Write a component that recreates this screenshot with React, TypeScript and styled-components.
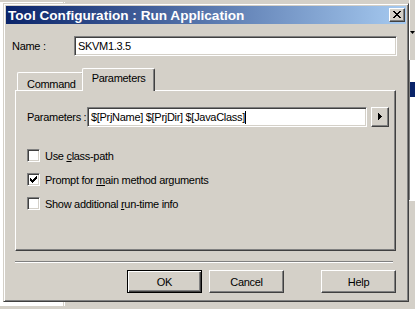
import styled, { createGlobalStyle, css } from 'styled-components'

const face = '#d4d0c8'
const shadow = '#808080'
const dark = '#404040'

const GlobalStyle = createGlobalStyle`
  html, body {
    margin: 0;
    padding: 0;
    background: ${face};
  }
  body {
    font-family: 'Liberation Sans', Arial, sans-serif;
    font-size: 11px;
    letter-spacing: -0.3px;
    color: #000;
  }
`

const Desktop = styled.div`
  position: relative;
  width: 415px;
  height: 309px;
  overflow: hidden;
  background: ${face};
`

/* windows behind the dialog */
const ProjectPane = styled.div`
  position: absolute;
  left: 0;
  top: 2px;
  width: 63px;
  height: 304px;
  background: #fff;
  border-right: 1px solid ${face};
  box-shadow: 1px 0 #fff;
`

const EditorEdge = styled.div`
  position: absolute;
  left: 409px;
  top: 0;
  width: 6px;
  height: 309px;
  display: flex;
  flex-direction: column;
  background: ${face};
`

const EdgeToolbar = styled.div`
  height: 60px;
  display: flex;
  align-items: flex-start;
  justify-content: flex-end;
  padding-top: 31px;
  box-sizing: border-box;
  border-left: 1px solid #fff;
`

const EdgeList = styled.div`
  height: 140px;
  background: #fff;
  padding-top: 22px;
  box-sizing: border-box;
  border-left: 1px solid ${shadow};
`

const EdgeSelection = styled.div`
  height: 15px;
  background: #0a246a;
`

const EdgeFooter = styled.div`
  flex: 1;
  border-top: 1px solid #fff;
`

/* dialog */
const Dialog = styled.div`
  position: absolute;
  left: 3px;
  top: 3px;
  width: 406px;
  height: 299px;
  box-sizing: border-box;
  background: ${face};
  border: 1px solid;
  border-color: ${face} ${dark} ${dark} ${face};
  box-shadow: inset 1px 1px #fff, inset -1px -1px ${shadow};
  padding: 2px;
  display: flex;
  flex-direction: column;
`

const TitleBar = styled.div`
  height: 18px;
  flex: none;
  display: flex;
  align-items: center;
  justify-content: space-between;
  padding: 0 1px 0 2px;
  background: linear-gradient(to right, #0a246a, #a6caf0);
`

const Title = styled.span`
  color: #fff;
  font-weight: bold;
  font-size: 13.6px;
  letter-spacing: 0;
  white-space: nowrap;
`

const CloseButton = styled.div`
  width: 16px;
  height: 14px;
  box-sizing: border-box;
  background: ${face};
  border: 1px solid;
  border-color: #fff ${dark} ${dark} #fff;
  box-shadow: inset -1px -1px ${shadow};
  display: flex;
  align-items: center;
  justify-content: center;
  padding: 0 1px 1px 0;
`

const Content = styled.div`
  flex: 1;
  display: flex;
  flex-direction: column;
  padding-top: 12px;
`

const NameRow = styled.div`
  display: flex;
  align-items: center;
  height: 20px;
  margin: 0 9px 0 6px;
`

const FieldLabel = styled.span<{ $width: number }>`
  width: ${(p) => p.$width}px;
  flex: none;
  white-space: nowrap;
`

const TextBox = styled.div`
  flex: 1;
  height: 20px;
  box-sizing: border-box;
  background: #fff;
  border: 1px solid;
  border-color: ${shadow} #fff #fff ${shadow};
  box-shadow: inset 1px 1px ${dark}, inset -1px -1px ${face};
  padding: 0 3px;
  display: flex;
  align-items: center;
  white-space: nowrap;
  overflow: hidden;
`

const Caret = styled.span`
  display: inline-block;
  width: 1px;
  height: 13px;
  background: #000;
`

const TabArea = styled.div`
  margin: 12px 10px 0 9px;
  display: flex;
  flex-direction: column;
`

const TabStrip = styled.div`
  height: 22px;
  display: flex;
  align-items: flex-end;
  padding-left: 2px;
`

const Tab = styled.div<{ $active?: boolean }>`
  position: relative;
  box-sizing: border-box;
  background: ${face};
  border-top: 1px solid #fff;
  border-left: 1px solid #fff;
  border-right: 1px solid ${dark};
  border-radius: 2px 2px 0 0;
  box-shadow: inset -1px 0 ${shadow};
  white-space: nowrap;
  ${(p) =>
    p.$active
      ? css`
          height: 23px;
          margin: 0 -2px -1px;
          padding: 3px 8px 0 9px;
          z-index: 1;
        `
      : css`
          height: 18px;
          padding: 5px 7px 0 9px;
        `}
`

const Panel = styled.div`
  height: 161px;
  box-sizing: border-box;
  border: 1px solid;
  border-color: #fff ${dark} ${dark} #fff;
  box-shadow: inset -1px -1px ${shadow};
  padding: 16px 0 0 11px;
  display: flex;
  flex-direction: column;
`

const ParamRow = styled.div`
  display: flex;
  align-items: center;
  height: 20px;
  gap: 4px;
`

const ParamBox = styled(TextBox)`
  flex: none;
  width: 280px;
`

const ArrowButton = styled.div`
  width: 18px;
  height: 20px;
  box-sizing: border-box;
  background: ${face};
  border: 1px solid;
  border-color: #fff ${dark} ${dark} #fff;
  box-shadow: inset -1px -1px ${shadow};
  display: flex;
  align-items: center;
  justify-content: center;
  padding: 0 1px 1px 0;
`

const Options = styled.div`
  margin-top: 22px;
  display: flex;
  flex-direction: column;
  gap: 11px;
`

const CheckRow = styled.label`
  display: flex;
  align-items: center;
  gap: 5px;
  height: 13px;
  white-space: nowrap;
`

const CheckBox = styled.span`
  width: 13px;
  height: 13px;
  flex: none;
  box-sizing: border-box;
  background: #fff;
  border: 1px solid;
  border-color: ${shadow} #fff #fff ${shadow};
  box-shadow: inset 1px 1px ${dark}, inset -1px -1px ${face};
  display: flex;
  align-items: center;
  justify-content: center;
`

const Separator = styled.div`
  margin: 10px 13px 0 9px;
  height: 2px;
  border-top: 1px solid ${shadow};
  border-bottom: 1px solid #fff;
  box-sizing: border-box;
`

const ButtonRow = styled.div`
  margin: 7px 10px 0 0;
  display: flex;
  justify-content: flex-end;
  gap: 7px;
`

const PushButton = styled.div<{ $default?: boolean; $gap?: number }>`
  width: 75px;
  height: 23px;
  box-sizing: border-box;
  background: ${face};
  display: flex;
  align-items: center;
  justify-content: center;
  margin-left: ${(p) => p.$gap ?? 0}px;
  border: 1px solid;
  ${(p) =>
    p.$default
      ? css`
          border-color: #000;
          box-shadow: inset 1px 1px #fff, inset -1px -1px ${dark}, inset -2px -2px ${shadow};
        `
      : css`
          border-color: #fff ${dark} ${dark} #fff;
          box-shadow: inset -1px -1px ${shadow};
        `}
`

const closeRows = [
  [0, 1, 6, 7],
  [1, 2, 5, 6],
  [2, 3, 4, 5],
  [3, 4],
  [2, 3, 4, 5],
  [1, 2, 5, 6],
  [0, 1, 6, 7],
]

function CloseGlyph() {
  return (
    <svg width="8" height="7" viewBox="0 0 8 7" shapeRendering="crispEdges">
      {closeRows.flatMap((row, y) =>
        row.map((x) => <rect key={`${x}-${y}`} x={x} y={y} width="1" height="1" fill="#000" />),
      )}
    </svg>
  )
}

function CheckMark() {
  return (
    <svg width="7" height="7" viewBox="0 0 7 7" shapeRendering="crispEdges">
      <path d="M0 2h1v1h1v1h1v-1h1v-1h1v-1h1v-1h1v3h-1v1h-1v1h-1v1h-1v1h-1v-1h-1v-1h-1v-1h-1z" fill="#000" />
    </svg>
  )
}

function ArrowGlyph() {
  return (
    <svg width="4" height="7" viewBox="0 0 4 7" shapeRendering="crispEdges">
      <path d="M0 0h1v1h1v1h1v1h1v1h-1v1h-1v1h-1v1h-1z" fill="#000" />
    </svg>
  )
}

function Option({ checked, before, mnemonic, after }: { checked?: boolean; before: string; mnemonic: string; after: string }) {
  return (
    <CheckRow>
      <CheckBox>{checked && <CheckMark />}</CheckBox>
      <span>
        {before}
        <u>{mnemonic}</u>
        {after}
      </span>
    </CheckRow>
  )
}

export default function App() {
  return (
    <Desktop>
      <GlobalStyle />
      <ProjectPane />
      <EditorEdge>
        <EdgeToolbar>
          <svg width="5" height="3" viewBox="0 0 5 3">
            <path d="M0 0h5l-2.5 3z" fill="#000" />
          </svg>
        </EdgeToolbar>
        <EdgeList>
          <EdgeSelection />
        </EdgeList>
        <EdgeFooter />
      </EditorEdge>

      <Dialog>
        <TitleBar>
          <Title>Tool Configuration : Run Application</Title>
          <CloseButton>
            <CloseGlyph />
          </CloseButton>
        </TitleBar>
        <Content>
          <NameRow>
            <FieldLabel $width={62}>Name :</FieldLabel>
            <TextBox>SKVM1.3.5</TextBox>
          </NameRow>

          <TabArea>
            <TabStrip>
              <Tab>Command</Tab>
              <Tab $active>Parameters</Tab>
            </TabStrip>
            <Panel>
              <ParamRow>
                <FieldLabel $width={56}>Parameters :</FieldLabel>
                <ParamBox>
                  $[PrjName] $[PrjDir] $[JavaClass]
                  <Caret />
                </ParamBox>
                <ArrowButton>
                  <ArrowGlyph />
                </ArrowButton>
              </ParamRow>
              <Options>
                <Option before="Use " mnemonic="c" after="lass-path" />
                <Option checked before="Prompt for " mnemonic="m" after="ain method arguments" />
                <Option before="Show additional " mnemonic="r" after="un-time info" />
              </Options>
            </Panel>
          </TabArea>

          <Separator />

          <ButtonRow>
            <PushButton $default>OK</PushButton>
            <PushButton>Cancel</PushButton>
            <PushButton $gap={30}>Help</PushButton>
          </ButtonRow>
        </Content>
      </Dialog>
    </Desktop>
  )
}
